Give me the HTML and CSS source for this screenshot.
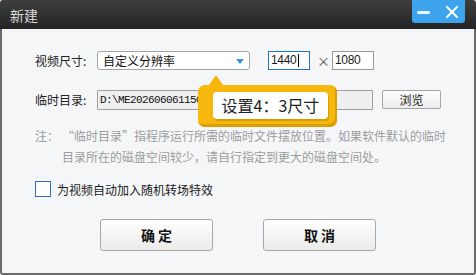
FILE: index.html
```html
<!DOCTYPE html>
<html lang="zh-CN">
<head>
<meta charset="utf-8">
<title>新建</title>
<link rel="stylesheet" href="styles.css">
</head>
<body>
<div class="window">
  <div class="titlebar">
    <span class="title">新建</span>
    <div class="sysbtns">
      <span class="btn-min"></span>
      <svg class="btn-close" width="12" height="12" viewBox="0 0 12 12"><path d="M1 1 L11 11 M11 1 L1 11" stroke="#fff" stroke-width="2" stroke-linecap="round"/></svg>
    </div>
  </div>
  <div class="content">
    <div class="row row-size">
      <span class="label">视频尺寸:</span>
      <div class="select"><span>自定义分辨率</span><span class="arrow"></span></div>
      <div class="num active">1440<span class="caret"></span></div>
      <span class="times">×</span>
      <div class="num">1080</div>
    </div>
    <div class="row row-dir">
      <span class="label">临时目录:</span>
      <div class="path">D:\ME2026060611500\Temp</div>
      <button class="browse">浏览</button>
    </div>
    <div class="note">
      <span class="note-head">注：</span>
      <p class="note-body">“临时目录”指程序运行所需的临时文件摆放位置。如果软件默认的临时目录所在的磁盘空间较少，请自行指定到更大的磁盘空间处。</p>
    </div>
    <label class="check"><span class="box"></span>为视频自动加入随机转场特效</label>
    <div class="actions">
      <button class="action">确 定</button>
      <button class="action">取 消</button>
    </div>
    <div class="callout">
      <span class="pointer"></span>
      <div class="callout-inner">设置4：3尺寸</div>
    </div>
  </div>
</div>
</body>
</html>
```
FILE: styles.css
```css
* { box-sizing: border-box; }
html, body { margin: 0; padding: 0; }
body {
  width: 476px;
  height: 275px;
  font-family: "Noto Sans CJK SC", "Noto Sans", sans-serif;
  background: #f5f6f8;
  overflow: hidden;
}
.window { width: 476px; height: 275px; display: flex; flex-direction: column; }
.titlebar {
  height: 29px;
  flex: none;
  background: linear-gradient(#3e3e3e, #242424);
  display: flex;
  align-items: flex-start;
  justify-content: space-between;
  padding: 0 11px 0 10px;
  border-radius: 3px 3px 0 0;
}
.title { color: #d9d9d9; font-size: 14px; line-height: 30px; }
.sysbtns {
  width: 53px;
  height: 23px;
  background: #3ea3ed;
  border-radius: 0 0 3px 3px;
  display: flex;
  align-items: center;
  padding: 0 0 0 5px;
  gap: 16px;
}
.btn-min { width: 13px; height: 3px; background: #eef6fd; border-radius: 2px; margin-top: 1px; }
.btn-close { display: block; }
.content {
  flex: 1;
  position: relative;
  border: 2px solid #6b6b6b;
  border-top: 0;
  border-radius: 0 0 3px 3px;
  background: #f5f6f8;
  padding: 22px 0 0 33px;
  font-size: 12px;
  color: #1a1a1a;
}
.row { display: flex; align-items: center; height: 19px; }
.label { width: 62px; font-size: 12px; color: #222; }
.select {
  width: 153px;
  height: 19px;
  border: 1px solid #a3a3a3;
  border-radius: 3px;
  background: #fff;
  display: flex;
  align-items: center;
  justify-content: space-between;
  padding: 0 5px 0 5px;
  font-size: 12px;
  color: #111;
}
.arrow {
  width: 0; height: 0;
  border-left: 4px solid transparent;
  border-right: 4px solid transparent;
  border-top: 5px solid #3a90e0;
  margin-top: 1px;
}
.num {
  width: 42px;
  height: 19px;
  border: 1px solid #9a9a9a;
  background: #fff;
  margin-left: 18px;
  font-family: "Liberation Sans", sans-serif;
  font-size: 12px;
  line-height: 17px;
  padding-left: 2px;
  letter-spacing: -0.3px;
  display: flex;
  align-items: center;
}
.num.active { border-color: #1d74d0; }
.caret { width: 1px; height: 13px; background: #000; margin-left: 1px; }
.times { margin-left: 7px; font-size: 13px; color: #555; width: 10px; }
.times + .num { margin-left: 5px; }
.row-dir { margin-top: 20px; }
.path {
  width: 276px;
  height: 20px;
  border: 1px solid #a0a0a0;
  background: #efefef;
  font-family: "Liberation Mono", monospace;
  font-size: 11px;
  letter-spacing: -0.6px;
  padding-left: 2px;
  line-height: 18px;
  color: #111;
  white-space: nowrap;
  overflow: hidden;
}
.browse {
  margin-left: 9px;
  width: 59px;
  height: 19px;
  border: 1px solid #a5a5a5;
  border-radius: 2px;
  background: linear-gradient(#fefefe, #ececec);
  font-family: "Noto Sans CJK SC", sans-serif;
  font-size: 12px;
  color: #222;
  padding: 0;
  line-height: 17px;
}
.note {
  display: flex;
  margin-top: 16px;
  width: 412px;
  color: #9d9d9d;
  font-size: 12px;
  line-height: 21px;
}
.note-head { flex: none; width: 27px; }
.note-body { margin: 0; }
.check {
  display: flex;
  align-items: center;
  margin-top: 14px;
  height: 16px;
  font-size: 12px;
  color: #1a1a1a;
}
.box {
  width: 16px; height: 16px;
  border: 1px solid #2c6fc0;
  background: #fff;
  margin-right: 6px;
}
.actions {
  display: flex;
  gap: 50px;
  margin: 22px 0 0 65px;
}
.action {
  width: 113px;
  height: 32px;
  border: 1px solid #a8a8a8;
  border-radius: 3px;
  background: linear-gradient(#fefefe, #ebebeb);
  font-family: "Noto Sans CJK SC", sans-serif;
  font-size: 14px;
  font-weight: bold;
  color: #111;
  padding: 0;
}
.callout {
  position: absolute;
  left: 196px;
  top: 56px;
  width: 139px;
  height: 42px;
  background: #f6b80c;
  border-radius: 7px;
  box-shadow: inset -2px -3px 0 #dc9e00;
  padding: 7px 9px 8px 15px;
}
.pointer {
  position: absolute;
  left: 11px;
  top: -10px;
  width: 0; height: 0;
  border-left: 7px solid transparent;
  border-right: 7px solid transparent;
  border-bottom: 10px solid #f6b80c;
}
.callout-inner {
  height: 27px;
  background: #fff;
  border-radius: 4px;
  box-shadow: 1px 2px 1px rgba(150, 100, 0, 0.35);
  font-size: 16px;
  line-height: 27px;
  text-align: center;
  color: #222;
  font-weight: 400;
}
```
